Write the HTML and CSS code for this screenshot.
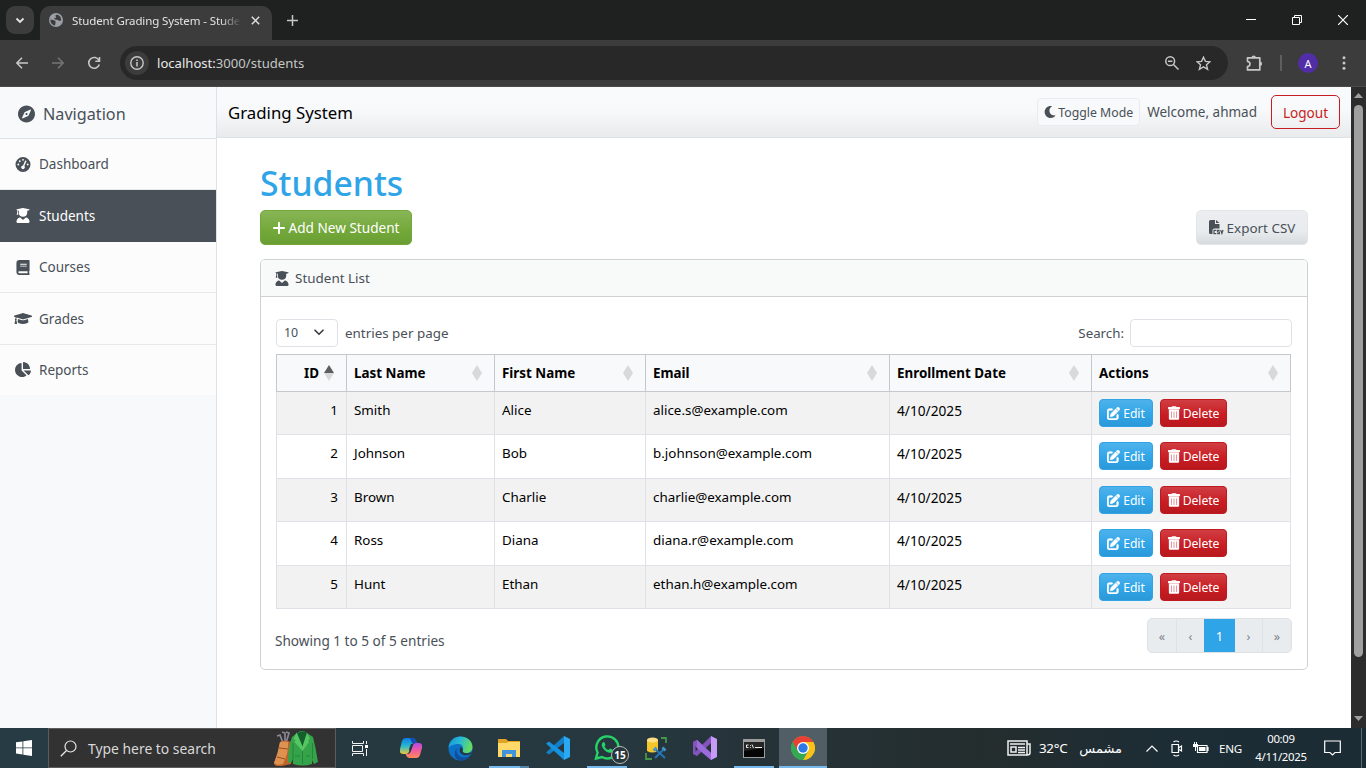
FILE: index.html
```html
<!DOCTYPE html>
<html lang="en">
<head>
<meta charset="utf-8">
<title>Student Grading System - Students</title>
<link rel="stylesheet" href="styles.css">
</head>
<body>
<svg class="sprite" aria-hidden="true">
  <defs>
    <symbol id="compass" viewBox="0 0 496 512"><path d="M225.38 233.37c-12.5 12.5-12.5 32.76 0 45.25 12.49 12.5 32.76 12.5 45.25 0 12.5-12.5 12.5-32.76 0-45.25-12.5-12.49-32.76-12.49-45.25 0zM248 8C111.03 8 0 119.03 0 256s111.03 248 248 248 248-111.03 248-248S384.97 8 248 8zm126.14 148.05L308.17 300.4a31.938 31.938 0 0 1-15.77 15.77l-144.34 65.97c-16.65 7.61-33.81-9.55-26.2-26.2l65.98-144.35a31.938 31.938 0 0 1 15.77-15.77l144.34-65.97c16.65-7.6 33.8 9.55 26.19 26.2z"/></symbol>
    <symbol id="gauge" viewBox="0 0 512 512"><path fill-rule="evenodd" d="M256 0a256 256 0 1 1 0 512A256 256 0 0 1 256 0zM256 64a32 32 0 1 0 0 64 32 32 0 0 0 0-64zM144 112a32 32 0 1 0 0 64 32 32 0 0 0 0-64zM96 224a32 32 0 1 0 0 64 32 32 0 0 0 0-64zM416 224a32 32 0 1 0 0 64 32 32 0 0 0 0-64zM256 416c35 0 64-29 64-64 0-17-7-33-18-45l69-157c5-12 0-26-12-32s-26 0-32 12l-69 158h-2c-35 0-64 29-64 64s29 64 64 64z"/></symbol>
    <symbol id="graduate" viewBox="0 0 448 512"><path d="M219 3c3-1 7-1 10 0l203 40c9 2 16 8 16 17s-7 15-16 17l-64 15v68c0 82-62 140-144 140S80 242 80 160V92L50 86v58l18 84H8l18-84V80C10 77 0 69 0 60s7-15 16-17zM104 322c8-3 17 0 22 5l80 66c10 9 26 9 36 0l80-66c5-5 14-8 22-5 65 24 104 80 104 150 0 22-18 40-40 40H40c-22 0-40-18-40-40 0-70 39-126 104-150z"/></symbol>
    <symbol id="book" viewBox="0 0 448 512"><path d="M448 360V24c0-13.3-10.7-24-24-24H96C43 0 0 43 0 96v320c0 53 43 96 96 96h328c13.3 0 24-10.7 24-24v-16c0-7.5-3.5-14.3-8.9-18.7-4.2-15.4-4.2-59.3 0-74.7 5.4-4.3 8.9-11.1 8.9-18.6zM128 134c0-3.3 2.7-6 6-6h212c3.3 0 6 2.7 6 6v20c0 3.3-2.7 6-6 6H134c-3.3 0-6-2.7-6-6v-20zm0 64c0-3.3 2.7-6 6-6h212c3.3 0 6 2.7 6 6v20c0 3.3-2.7 6-6 6H134c-3.3 0-6-2.7-6-6v-20zm253.4 250H96c-17.7 0-32-14.3-32-32 0-17.6 14.4-32 32-32h285.4c-1.9 17.1-1.9 46.9 0 64z"/></symbol>
    <symbol id="cap" viewBox="0 0 640 512"><path d="M622.34 153.2L343.4 67.5c-15.2-4.67-31.6-4.67-46.79 0L17.66 153.2c-23.54 7.23-23.54 38.36 0 45.59l48.63 14.94c-10.67 13.19-17.23 29.28-17.88 46.9C38.78 266.15 32 276.11 32 288c0 10.78 5.68 19.85 13.86 25.65L20.33 428.53C18.11 438.52 25.71 448 35.94 448h56.11c10.24 0 17.84-9.48 15.62-19.47L82.14 313.65C90.32 307.85 96 298.78 96 288c0-11.57-6.47-21.25-15.66-26.87.76-15.02 8.44-28.3 20.69-36.72L296.6 284.5c9.06 2.78 26.44 6.25 46.79 0l278.95-85.7c23.55-7.24 23.55-38.36 0-45.6zM352.79 315.09c-28.53 8.76-52.84 3.92-65.59 0l-145.02-44.55L128 384c0 35.35 85.96 64 192 64s192-28.65 192-64l-14.18-113.47-145.03 44.56z"/></symbol>
    <symbol id="pie" viewBox="0 0 544 512"><path d="M527.79 288H290.5l158.03 158.03c6.04 6.04 15.98 6.53 22.19.68 38.7-36.46 65.32-85.61 73.13-140.86 1.34-9.46-6.51-17.85-16.06-17.85zm-15.83-64.8C503.72 103.74 408.26 8.28 288.8.04 279.68-.59 272 7.1 272 16.24V240h223.77c9.14 0 16.82-7.68 16.19-16.8zM224 288V50.71c0-9.55-8.39-17.4-17.84-16.06C86.99 51.49-4.1 155.6.14 280.37 4.5 408.51 114.83 513.59 243.03 511.98c50.4-.63 96.97-16.87 135.26-44.03 7.9-5.6 8.42-17.23 1.57-24.08L224 288z"/></symbol>
    <symbol id="moon" viewBox="0 0 512 512"><path d="M283.211 512c78.962 0 151.079-35.925 198.857-94.792 7.068-8.708-.639-21.43-11.562-19.35-124.203 23.654-238.262-71.576-238.262-196.954 0-72.222 38.662-138.635 101.498-174.394 9.686-5.512 7.25-20.197-3.756-22.23A258.156 258.156 0 0 0 283.211 0c-141.309 0-256 114.511-256 256 0 141.309 114.511 256 256 256z"/></symbol>
    <symbol id="edit" viewBox="0 0 512 512"><path stroke="currentColor" stroke-width="22" d="M471.6 21.7c-21.9-21.9-57.3-21.9-79.2 0L362.3 51.7l97.9 97.9 30.1-30.1c21.9-21.9 21.9-57.3 0-79.2L471.6 21.7zm-299.2 220c-6.1 6.1-10.8 13.6-13.5 21.9l-29.6 88.800c-2.9 8.6-.6 18.1 5.8 24.600s15.900 8.700 24.600 5.800l88.800-29.600c8.2-2.700 15.700-7.400 21.900-13.500L437.700 172.300 339.700 74.300 172.400 241.700zM96 64C43 64 0 107 0 160V416c0 53 43 96 96 96H352c53 0 96-43 96-96V320c0-17.700-14.300-32-32-32s-32 14.300-32 32v96c0 17.700-14.300 32-32 32H96c-17.700 0-32-14.300-32-32V160c0-17.700 14.300-32 32-32h96c17.700 0 32-14.300 32-32s-14.300-32-32-32H96z"/></symbol>
    <symbol id="trash" viewBox="0 0 448 512"><path fill-rule="evenodd" d="M135 18L128 32H24C10 32 0 42 0 56v32c0 14 10 24 24 24H424c14 0 24-10 24-24V56c0-14-10-24-24-24H320l-7-14C307 7 296 0 284 0H164c-12 0-23 7-29 18zM32 128H416V464c0 27-21 48-48 48H80c-27 0-48-21-48-48z"/><path d="M130 200v240M224 200v240M318 200v240" stroke="#e58a90" stroke-width="34"/></symbol>
    <symbol id="sort" viewBox="0 0 10 16"><path d="M5 0l5 8H0z" class="sort-up"/><path d="M5 16l5-8H0z"/></symbol>
  </defs>
</svg>

<div class="screen">
  <div class="tabstrip">
    <button class="tab-search"><svg width="10" height="7" viewBox="0 0 10 7"><path d="M1.500 1.500L5 5l3.500-3.500" fill="none" stroke="#e3e3e3" stroke-width="1.800"/></svg></button>
    <div class="tab">
      <svg width="14" height="14" viewBox="0 0 14 14"><circle cx="7" cy="7" r="7" fill="#9aa0a6"/><path d="M1.500 6.500L4 7l2.500 1v2L6 12.500C3 12 1.200 9.500 1.500 6.500zM6.500 2L9 1.700l2.500 2.200.8 3.400-2 .7L9 7 6 6.500 5 5h2z" fill="#3c3c3c"/></svg>
      <span class="tab-title">Student Grading System - Stude</span>
      <svg width="9" height="9" viewBox="0 0 9 9"><path d="M.8.8l7.400 7.400M8.200.8L.8 8.200" stroke="#dfdfdf" stroke-width="1.500"/></svg>
    </div>
    <svg class="tab-new" width="11" height="11" viewBox="0 0 11 11"><path d="M5.500 0v11M0 5.500h11" stroke="#c7c7c7" stroke-width="1.500"/></svg>
    <div class="window-buttons">
      <svg width="10" height="10" viewBox="0 0 10 10"><path d="M0 4.500h10" stroke="#fff"/></svg>
      <svg width="10" height="10" viewBox="0 0 10 10"><path d="M.5 2.500h7v7h-7zM2.500 2.500v-2h7v7h-2" fill="none" stroke="#fff"/></svg>
      <svg width="10" height="10" viewBox="0 0 10 10"><path d="M0 0l10 10M10 0L0 10" stroke="#fff" stroke-width="1.200"/></svg>
    </div>
  </div>

  <div class="toolbar">
    <svg class="tool" width="12" height="12" viewBox="0 0 12 12"><path d="M12 6H1M6 .8L.9 6 6 11.200" fill="none" stroke="#c7c7c7" stroke-width="1.500"/></svg>
    <svg class="tool" width="12" height="12" viewBox="0 0 12 12"><path d="M0 6h11M6 .8L11.100 6 6 11.200" fill="none" stroke="#757575" stroke-width="1.500"/></svg>
    <svg class="tool" width="14" height="14" viewBox="0 0 14 14"><path d="M12 4.500A5.400 5.400 0 1 0 12.300 8.500M12.500 1v4.300H8.300" fill="none" stroke="#c7c7c7" stroke-width="1.600"/></svg>
    <div class="omnibox">
      <span class="site-info"><svg width="14" height="14" viewBox="0 0 14 14"><circle cx="7" cy="7" r="6.200" fill="none" stroke="#c7c7c7" stroke-width="1.400"/><path d="M7 6v4.500M7 3.500v1.500" stroke="#c7c7c7" stroke-width="1.500"/></svg></span>
      <span class="url">localhost:<span class="url-path">3000/students</span></span>
      <svg width="14" height="14" viewBox="0 0 14 14"><circle cx="5.200" cy="5.200" r="4.400" fill="none" stroke="#c7c7c7" stroke-width="1.500"/><path d="M8.500 8.500l5 5M3 5.200h4.400" stroke="#c7c7c7" stroke-width="1.500"/></svg>
      <svg class="star" width="15" height="15" viewBox="0 0 15 15"><path d="M7.500 1.200l1.900 4.200 4.600.4-3.500 3 1.100 4.600-4.100-2.500-4.100 2.500 1.100-4.600-3.500-3 4.600-.4z" fill="none" stroke="#c7c7c7" stroke-width="1.400"/></svg>
    </div>
    <svg class="puzzle" width="17" height="17" viewBox="0 0 17 17"><path d="M1.500 2.800H13.800V14.900H1.500V11.600C4.800 11 4.800 6.900 1.500 6.300z" fill="none" stroke="#c7c7c7" stroke-width="1.700" stroke-linejoin="round"/><path d="M5.500 2.800a2.200 2.200 0 0 1 4.400 0zM13.800 6.500a2.300 2.300 0 0 1 0 4.600z" fill="#c7c7c7"/></svg>
    <span class="tool-divider"></span>
    <span class="avatar">A</span>
    <svg class="kebab" width="4" height="14" viewBox="0 0 4 14"><g fill="#c7c7c7"><circle cx="2" cy="1.700" r="1.500"/><circle cx="2" cy="7" r="1.500"/><circle cx="2" cy="12.300" r="1.500"/></g></svg>
  </div>

  <div class="viewport">
    <aside class="sidebar">
      <div class="side-head"><svg><use href="#compass"/></svg>Navigation</div>
      <a class="side-link"><svg><use href="#gauge"/></svg><span>Dashboard</span></a>
      <a class="side-link active"><svg><use href="#graduate"/></svg><span>Students</span></a>
      <a class="side-link"><svg><use href="#book"/></svg><span>Courses</span></a>
      <a class="side-link tall"><svg class="wide"><use href="#cap"/></svg><span>Grades</span></a>
      <a class="side-link last"><svg class="pie"><use href="#pie"/></svg><span>Reports</span></a>
    </aside>

    <div class="page">
      <header class="navbar">
        <span class="brand">Grading System</span>
        <button class="mode"><svg width="12" height="12"><use href="#moon"/></svg>Toggle Mode</button>
        <span class="welcome">Welcome, ahmad</span>
        <button class="logout">Logout</button>
      </header>

      <main class="content">
        <h1>Students</h1>
        <div class="actions">
          <button class="btn-add"><svg width="12" height="12" viewBox="0 0 12 12"><path d="M6 .8v10.400M.8 6h10.400" stroke="#fff" stroke-width="1.900" stroke-linecap="round"/></svg>Add New Student</button>
          <button class="btn-export"><svg width="15" height="15" viewBox="0 0 15 15"><path d="M0 1.500Q0 0 1.500 0H6v4h4.500v4.500H5.500Q3.500 8.500 3.500 10v4H1.500Q0 14 0 12.500zM7 0l3.500 3H7z" fill="#495057"/><path d="M7.300 10.400H5v3.200h2.300M10.600 10.400H8.500V12h1.900v1.600H8.200M11.700 10l1.200 3.400L14.100 10" fill="none" stroke="#495057" stroke-width="1.200"/></svg>Export CSV</button>
        </div>

        <section class="card">
          <div class="card-head"><svg><use href="#graduate"/></svg>Student List</div>
          <div class="card-body">
            <div class="controls">
              <span class="page-size">10<svg width="10" height="7" viewBox="0 0 10 7"><path d="M1 1.200l4 4 4-4" fill="none" stroke="#343a40" stroke-width="1.600" stroke-linecap="round"/></svg></span>
              <span class="per-page">entries per page</span>
              <label>Search:</label><input class="search">
            </div>
            <table>
              <colgroup><col class="c-id"><col class="c-last"><col class="c-first"><col class="c-mail"><col class="c-date"><col class="c-act"></colgroup>
              <thead>
                <tr>
                  <th><div class="th id sorted">ID<svg><use href="#sort"/></svg></div></th>
                  <th><div class="th">Last Name<svg><use href="#sort"/></svg></div></th>
                  <th><div class="th">First Name<svg><use href="#sort"/></svg></div></th>
                  <th><div class="th">Email<svg><use href="#sort"/></svg></div></th>
                  <th><div class="th">Enrollment Date<svg><use href="#sort"/></svg></div></th>
                  <th><div class="th">Actions<svg><use href="#sort"/></svg></div></th>
                </tr>
              </thead>
              <tbody>
                <tr><td class="num">1</td><td>Smith</td><td>Alice</td><td>alice.s@example.com</td><td>4/10/2025</td><td class="ops"><div><button class="edit"><svg><use href="#edit"/></svg>Edit</button><button class="delete"><svg><use href="#trash"/></svg>Delete</button></div></td></tr>
                <tr><td class="num">2</td><td>Johnson</td><td>Bob</td><td>b.johnson@example.com</td><td>4/10/2025</td><td class="ops"><div><button class="edit"><svg><use href="#edit"/></svg>Edit</button><button class="delete"><svg><use href="#trash"/></svg>Delete</button></div></td></tr>
                <tr><td class="num">3</td><td>Brown</td><td>Charlie</td><td>charlie@example.com</td><td>4/10/2025</td><td class="ops"><div><button class="edit"><svg><use href="#edit"/></svg>Edit</button><button class="delete"><svg><use href="#trash"/></svg>Delete</button></div></td></tr>
                <tr><td class="num">4</td><td>Ross</td><td>Diana</td><td>diana.r@example.com</td><td>4/10/2025</td><td class="ops"><div><button class="edit"><svg><use href="#edit"/></svg>Edit</button><button class="delete"><svg><use href="#trash"/></svg>Delete</button></div></td></tr>
                <tr><td class="num">5</td><td>Hunt</td><td>Ethan</td><td>ethan.h@example.com</td><td>4/10/2025</td><td class="ops"><div><button class="edit"><svg><use href="#edit"/></svg>Edit</button><button class="delete"><svg><use href="#trash"/></svg>Delete</button></div></td></tr>
              </tbody>
            </table>
            <div class="table-foot">
              <span class="info">Showing 1 to 5 of 5 entries</span>
              <div class="pager"><span class="p1">«</span><span class="p2">‹</span><span class="current">1</span><span class="p2">›</span><span class="p1">»</span></div>
            </div>
          </div>
        </section>
      </main>
    </div>

    <div class="scrollbar">
      <svg width="9" height="5" viewBox="0 0 9 5"><path d="M4.500 0L9 5H0z" fill="#9f9f9f"/></svg>
      <span class="thumb"></span>
      <svg width="9" height="5" viewBox="0 0 9 5"><path d="M4.500 5L9 0H0z" fill="#9f9f9f"/></svg>
    </div>
  </div>

  <div class="taskbar">
    <span class="start"><svg width="16" height="16" viewBox="0 0 16 16"><path d="M0 2.300L6.500 1.400V7.500H0zM7.300 1.300L16 0V7.500H7.300zM0 8.300H6.500v6.200L0 13.600zM7.300 8.300H16V16L7.300 14.700z" fill="#fff"/></svg></span>
    <div class="task-search">
      <svg width="17" height="17" viewBox="0 0 17 17"><circle cx="10.500" cy="6.500" r="5.500" fill="none" stroke="#e6e6e6" stroke-width="1.200"/><path d="M6.500 10.500L.8 16.200" stroke="#e6e6e6" stroke-width="1.300"/></svg>
      <span>Type here to search</span>
      <svg class="jacket" width="45" height="36" viewBox="0 0 45 36"><path d="M9 13L6 5 3 6M11 13V3L8 2M12 13L15 3l-3-1" fill="none" stroke="#8d8796" stroke-width="1.700"/><path d="M6 12q5-3 11 0l2 4-2 18-9 2q-8 1-8-3 2-4 4-11z" fill="#b9652b"/><path d="M6 12q4-1 8 0 1 10-5 22-7 2-9-1 4-10 6-21z" fill="#df914f"/><path d="M5 18l9 1M3 27l8 2" stroke="#96501f"/><path d="M23 3q5-4 10 0l6 4q3 12 5 25l-4 2-2-4v4q-9 3-19 0v-5l-2 4-3-1q0-15 4-25z" fill="#35a34a"/><path d="M23 3l5.500 14L34 3q-5-3-11 0z" fill="#14602c"/><path d="M22.500 2.500l-3 6.500 2 1-1 2 8 9 6.500-9-1-2 2-1-3-6.500-4.500 14z" fill="#55c663"/><path d="M28.500 21v13M19 13v16M38.500 13v16M21 26h5M32 26h4" stroke="#207f34" stroke-width=".8" fill="none"/></svg>
    </div>
    <span class="task"><svg width="16" height="15" viewBox="0 0 16 15"><path d="M.5 0v2.500h11V0M.5 15v-2.500h11V15M.5 4.500h10v6H.5zM14.500 0v3M14.500 8v7" fill="none" stroke="#f2f2f2"/><path d="M13 4h3v3h-3z" fill="#fff"/></svg></span>
    <span class="task copilot"><svg width="22" height="21" viewBox="0 0 22 21"><defs><linearGradient id="cpA" x1="0" y1="0" x2="0" y2="1"><stop offset="0" stop-color="#0a7de2"/><stop offset=".5" stop-color="#28b7d0"/><stop offset="1" stop-color="#e9c83d"/></linearGradient><linearGradient id="cpB" x1="0" y1="0" x2="0" y2="1"><stop offset="0" stop-color="#b44be8"/><stop offset=".5" stop-color="#f25b9d"/><stop offset="1" stop-color="#ff8b57"/></linearGradient></defs><path d="M6 0h7q2 0 3 3l1 2h-3q-2 0-3 3l-2 6q-1 2-3 2H3q-4 0-3-5l2-8q1-3 4-3z" fill="url(#cpA)"/><path d="M16 20H9q-2 0-3-3l-.5-1H8q2 0 3-3l2-6q1-2 3-2h3q4 0 3 5l-2 7q-1 3-4 3z" fill="url(#cpB)"/><path d="M10 0h3q2 0 3 3l1 2h-3L12 5z" fill="#184bb8"/><path d="M9 11l2-5h2l-3 8z" fill="#26373f"/></svg></span>
    <span class="task"><svg width="25" height="25" viewBox="0 0 25 25"><defs><linearGradient id="edge" x1="0" y1="0" x2="1" y2=".3"><stop offset="0" stop-color="#168fdb"/><stop offset=".5" stop-color="#27b9d6"/><stop offset="1" stop-color="#63db63"/></linearGradient></defs><circle cx="12.500" cy="12.500" r="12" fill="#0c72c7"/><path d="M.5 12C1 5 6 .5 12.500.5S24.500 5 24.500 11c0 4-3 6-6.500 6-3 0-4-1-3-3 .7-1.500 0-6-4.500-6S1.500 10 .5 12z" fill="url(#edge)"/><path d="M8.500 14c0 7 8 10 14 5-2 4-6 5.500-10 5.500C5.500 24.500 5 15 10 11c-1 1-1.500 2-1.500 3z" fill="#124f9b"/><path d="M12.500 11q-3 5 3 8 4 1 8-1.500V16q-3 2-7 1-3-1-1.500-3-.5-2-2.500-3z" fill="#253840"/></svg></span>
    <span class="task running explorer"><svg width="22" height="19" viewBox="0 0 22 19"><path d="M0 0h8l2 2h12v16H0z" fill="#e0a623"/><path d="M0 4h9l1-1h12v15H0z" fill="#ffd969"/><path d="M4 18v-7h14v7h-4v-3H8v3z" fill="#3f94dd"/></svg></span>
    <span class="task"><svg width="24" height="24" viewBox="0 0 24 24"><path d="M18 0l6 3v18l-6 3z" fill="#2aa8f2"/><path d="M18 0v7L3 18.500 0 16.500z" fill="#1180c9"/><path d="M18 24v-7L3 5.500 0 7.500z" fill="#1593df"/></svg></span>
    <span class="task running whatsapp"><svg width="26" height="26" viewBox="0 0 26 26"><path d="M2 23.500l1.600-6A11 11 0 1 1 8 22z" fill="none" stroke="#25d366" stroke-width="2.400"/><path d="M8.500 7.500q1-1 2 0l1 2.500-1 1.500q1 2.500 4 3.500l1.500-1.500 2.800 1.300q.5 2-2 3Q12 18 8.500 12.500 7 9.500 8.500 7.500z" fill="#25d366"/></svg><b class="badge">15</b></span>
    <span class="task"><svg width="22" height="23" viewBox="0 0 22 23"><path d="M2 3v11q5 3 11 0V3z" fill="#f5c62b"/><ellipse cx="7.500" cy="3" rx="5.500" ry="2.500" fill="#ffdf83"/><path d="M16 1h5v5M1 16v6h6" fill="none" stroke="#459647" stroke-width="1.800"/><path d="M10 12l10 9M19 12L10 21" stroke="#2375b8" stroke-width="2"/><path d="M8.500 13.500l3-3M17.500 10.500l3 3" stroke="#4695ce" stroke-width="2.500"/></svg></span>
    <span class="task"><svg width="24" height="24" viewBox="0 0 24 24"><path d="M0 6l4-2 14 13v7L3 11z" fill="#9060ce"/><path fill-rule="evenodd" d="M0 6l4-2 5 5 9-9v7L4 20l-4-2zM2.500 8.500v7L6 12z" fill="#8454bd"/><path d="M4 4l14 13v7L4 12z" fill="#9c6bda"/><path d="M18 0l6 3v18l-6 3z" fill="#c79af5"/></svg></span>
    <span class="task running"><svg width="22" height="19" viewBox="0 0 22 19"><path d="M0 0h22v19H0z" fill="#9d9d9d"/><path d="M1 3h20v15H1z" fill="#050505"/><path d="M1 3h20v6L1 12z" fill="#252525"/><path d="M5.500 6H3.500v2.500h2M7.500 6v.8M7.500 8v.8M9 5.500l1.500 3.500M12 8.500h7" fill="none" stroke="#eee"/></svg></span>
    <span class="task running chrome"><svg width="24" height="24" viewBox="0 0 24 24"><circle cx="12" cy="12" r="12" fill="#34a853"/><path d="M12 12L1.600 6A12 12 0 0 1 22.400 6z" fill="#e94235"/><path d="M12 6h10.400A12 12 0 0 1 12 24l5.200-9z" fill="#fbc116"/><path d="M1.600 6L6.800 15 12 12V6z" fill="#e94235"/><path d="M1.600 6l5.200 9 5.200 3 5-3-5 9A12 12 0 0 1 1.600 6z" fill="#34a853"/><circle cx="12" cy="12" r="6" fill="#fff"/><circle cx="12" cy="12" r="4.700" fill="#2c78e6"/></svg></span>
    <div class="tray">
      <svg width="24" height="16" viewBox="0 0 24 16"><path d="M1 1h19v14H1zM20 4h3v9q0 2-3 2M4 7h5v5H4zM3 4h15M11 7.500h7M11 10h7M11 12.500h7" fill="none" stroke="#efefef" stroke-width="1.500"/></svg>
      <span class="temp">32°C</span><span class="weather" dir="rtl">مشمس</span>
      <svg class="caret" width="12" height="7" viewBox="0 0 12 7"><path d="M.5 6.500L6 1l5.500 5.500" fill="none" stroke="#fff" stroke-width="1.200"/></svg>
      <svg class="cam" width="12" height="17" viewBox="0 0 12 17"><path d="M1 4.500h6.500v8H1zM8 7.500l2.500-1.500v5L8 9.500M2.500 2Q5 0 8 2M2.500 15Q5 17 8 15" fill="none" stroke="#fff" stroke-width="1.200"/></svg>
      <svg class="battery" width="16" height="12" viewBox="0 0 16 12"><path d="M4.500 3.500H14v7H4.500zM15 5v4" fill="none" stroke="#fff" stroke-width="1.200"/><path d="M6 5h6.500v4H6zM0 2h5v3H0zM1 0v2h1V0zM3 0v2h1V0zM2 5v4h1V5z" fill="#fff"/></svg>
      <span class="lang">ENG</span>
      <span class="clock"><span>00:09</span><span>4/11/2025</span></span>
      <svg class="notice" width="17" height="17" viewBox="0 0 17 17"><path d="M.7 1h15.600v11.500H11L8.500 15 6 12.500H.7z" fill="none" stroke="#fff" stroke-width="1.200"/></svg>
      <span class="peek"></span>
    </div>
  </div>
</div>
</body>
</html>
```
FILE: styles.css
```css
* { box-sizing: border-box; }
body { margin: 0; font-family: "Noto Sans", "Open Sans", sans-serif; font-size: 13.45px; color: #495057; }
button { font: inherit; margin: 0; }
svg { display: block; flex: none; fill: currentColor; }
.sprite { display: none; }
.screen { width: 1366px; height: 768px; display: flex; flex-direction: column; overflow: hidden; white-space: nowrap; }

/* Browser frame */
.tabstrip { height: 40px; background: #1f2020; display: flex; align-items: center; }
.tab-search { width: 28px; height: 28px; margin-left: 6px; padding: 0; border: 0; border-radius: 9px; background: #3c3c3c; display: grid; place-items: center; }
.tab { align-self: flex-end; width: 232px; height: 34px; margin-left: 6px; padding: 0 11px 6px 9px; border-radius: 10px 10px 0 0; background: #3c3c3c; display: flex; align-items: center; color: #e3e3e3; }
.tab-title { width: 169px; margin-left: 9px; margin-right: 10px; overflow: hidden; font-size: 11.5px; letter-spacing: -0.12px; -webkit-mask-image: linear-gradient(90deg, #000 88%, transparent); mask-image: linear-gradient(90deg, #000 88%, transparent); }
.tab-new { margin-left: 15px; }
.window-buttons { margin-left: auto; margin-right: 18px; display: flex; gap: 36px; }
.toolbar { height: 47px; background: #3c3c3c; border-bottom: 1px solid #4a4a4a; display: flex; align-items: center; padding-left: 16px; }
.tool { margin-right: 24px; }
.tool:nth-child(3) { margin-right: 19px; margin-left: -1px; }
.omnibox { width: 1108px; height: 34px; border-radius: 17px; background: #282828; display: flex; align-items: center; padding: 0 17px 0 5px; }
.site-info { width: 24px; height: 24px; border-radius: 50%; background: #3c3c3c; display: grid; place-items: center; }
.url { flex: 1; margin-left: 8px; color: #e8e8e8; font-size: 13.1px; }
.url-path { color: #c4c7c5; }
.star { margin-left: 17px; }
.puzzle { margin-left: 18px; }
.tool-divider { width: 2px; height: 16px; margin-left: 17px; background: #5e5e5e; }
.avatar { width: 20px; height: 20px; margin-left: 16px; border-radius: 50%; background: #512da8; color: #fff; font-size: 11px; display: grid; place-items: center; }
.kebab { margin-left: 24px; }

/* Application shell */
.viewport { height: 641px; display: flex; background: #fff; }
.sidebar { width: 217px; background: #f8f9fb; border-right: 1px solid #dee2e6; }
.side-head { height: 52px; padding: 2px 0 0 18px; border-bottom: 1px solid #dee2e6; display: flex; align-items: center; font-size: 16.2px; }
.side-head svg { width: 17px; height: 18px; margin-right: 8px; }
.side-link { height: 51px; padding-left: 14px; display: flex; align-items: center; background: #fcfcfc; border-bottom: 1px solid #e6e9ec; font-size: 13.5px; }
.side-link svg { width: 18px; height: 15px; margin-right: 7px; color: #495057; }
.side-link.active { height: 52px; background: #495057; border-color: #495057; color: #fff; }
.side-link.active svg { color: #fff; }
.side-link.tall { height: 52px; }
.side-link.last { height: 50px; padding-bottom: 1px; border-bottom: 0; }
.page { width: 1134px; }
.navbar { height: 51px; padding: 0 11px; border-bottom: 1px solid #dee2e6; background: linear-gradient(#f9fafb, #f8f9fa 45%, #e9eaec); display: flex; align-items: center; }
.brand { flex: 1; color: #000; font-size: 16.8px; }
.mode { height: 28px; width: 103px; padding: 0; border: 1px solid #e9ecef; border-radius: 4px; background: #f8f9fa; color: #495057; display: flex; align-items: center; justify-content: center; gap: 2px; font-size: 12.3px; }
.welcome { margin: 0 14px 0 7px; font-size: 13.5px; }
.logout { width: 69px; height: 34px; padding: 0; border: 1px solid #c71c22; border-radius: 5px; background: none; color: #c71c22; font-size: 13.6px; }
.content { padding: 22px 43px; }
h1 { margin: 0; height: 50px; line-height: 47px; font-size: 33.7px; font-weight: 500; color: #2fa4e7; }
.actions { display: flex; justify-content: space-between; height: 35px; }
.actions button { border-radius: 5px; display: flex; align-items: center; justify-content: center; gap: 4px; padding: 0; }
.actions .btn-add { width: 152px; border: 1px solid #73a839; background: linear-gradient(#88b557, #73a839 60%, #6a9e34); color: #fff; font-size: 13.6px; }
.actions .btn-export { width: 112px; gap: 3px; border: 1px solid #e2e6e9; background: linear-gradient(#ebedf0, #e9ecef 60%, #d7dbde); color: #495057; }

/* Student table card */
.card { height: 411px; margin-top: 14px; border: 1px solid #ced1d3; border-radius: 5px; overflow: hidden; }
.card-head { height: 37px; padding-left: 14px; background: #f8fafa; border-bottom: 1px solid #ced1d3; display: flex; align-items: center; }
.card-head svg { width: 14px; height: 15px; margin-right: 6px; }
.card-body { padding: 22px 15px 0; }
.controls { display: flex; align-items: center; height: 28px; margin-bottom: 7px; }
.page-size { width: 62px; height: 28px; padding: 0 13px 1px 7px; border: 1px solid #dee2e6; border-radius: 4px; display: flex; align-items: center; justify-content: space-between; font-size: 12.4px; }
.per-page { flex: 1; margin-left: 7px; padding-bottom: 1px; font-size: 13.4px; }
.controls label { padding-bottom: 1px; font-size: 13.3px; }
.search { width: 162px; height: 28px; margin-left: 6px; border: 1px solid #dee2e6; border-radius: 4px; background: #fff; }
table { width: 1015px; table-layout: fixed; border-collapse: collapse; color: #000; }
.c-id { width: 70px; } .c-last { width: 148px; } .c-first { width: 151px; } .c-mail { width: 244px; } .c-date { width: 202px; } .c-act { width: 199px; }
th, td { padding: 0 7px; border: 1px solid #dee2e6; text-align: left; }
th { height: 37px; border-color: #c6c7ca; background: #f8f9fb; font-weight: 700; font-size: 13.4px; }
.th { display: flex; align-items: center; justify-content: space-between; padding-right: 5px; }
.th.id { justify-content: flex-end; gap: 5px; }
.th svg { width: 10px; height: 16px; color: #d8d9db; }
.sorted svg { --up: #5d5e60; }
.sort-up { fill: var(--up, currentColor); }
td { height: 43px; vertical-align: top; padding-top: 9px; font-size: 13.4px; line-height: 19px; }
td:nth-child(5) { font-size: 13.7px; }
tbody tr:nth-child(even) td { height: 44px; }
tbody tr:nth-child(odd) td { background: #f2f2f2; }
td.num { text-align: right; padding-right: 8px; }
td.ops { padding-top: 7px; }
.ops div { display: flex; gap: 7px; }
.ops button { height: 28px; border-radius: 4px; padding: 0; color: #fff; display: flex; align-items: center; justify-content: center; gap: 2px; font-size: 12.2px; letter-spacing: -0.1px; }
.ops svg { height: 14px; width: 14px; }
.ops .delete svg { width: 12px; margin-right: 1px; }
.ops .edit svg { width: 13px; height: 13px; margin-right: 1px; }
.edit { width: 54px; border: 1px solid #2fa4e7; background: linear-gradient(#4eb2eb, #2fa4e7 60%, #2b98d7); }
.delete { width: 67px; border: 1px solid #bd1b20; background: linear-gradient(#d03e43, #c71c22 60%, #b7191e); }
.table-foot { display: flex; justify-content: space-between; margin-top: 9px; height: 35px; }
.info { align-self: flex-end; line-height: 25px; font-size: 13.6px; margin-left: -1px; }
.pager { display: flex; height: 35px; border: 1px solid #dee2e6; border-radius: 5px; overflow: hidden; background: #e9ecef; color: #7c8288; font-size: 12.4px; }
.pager span { display: grid; place-items: center; padding-top: 2px; }
.p1 { width: 29px; } .p2 { width: 27px; }
.pager .p1:first-child { border-right: 1px solid #dee2e6; }
.pager .p1:last-child { border-left: 1px solid #dee2e6; }
.pager .current { width: 31px; margin: -1px 0; padding: 0; background: #2fa4e7; color: #fff; font-size: 13px; }
.scrollbar { width: 15px; background: #2c2c2c; display: flex; flex-direction: column; align-items: center; padding: 6px 0 7px; }
.thumb { width: 9px; height: 552px; margin: 7px 0 auto; border-radius: 5px; background: #9f9f9f; }

/* Desktop taskbar */
.taskbar { height: 40px; background: linear-gradient(90deg, #263b43 0, #26373f 46%, #242d2e 72%, #1d2d35 85%, #1c2c34); display: flex; color: #fff; }
.start { width: 48px; display: grid; place-items: center; }
.task-search { width: 288px; border: 1px solid #5d5c59; background: #323232; display: flex; align-items: center; color: #d8d8d8; font-size: 13.9px; padding-left: 11px; }
.task-search span { margin-left: 11px; }
.jacket { margin-left: auto; margin-right: 16px; }
.task { width: 48px; margin-right: 1px; display: grid; place-items: center; position: relative; }
.task:nth-child(3) { margin-right: 3px; }
.task.running { box-shadow: inset 0 -2px #76b9ed; width: 40px; margin: 0 5px 0 4px; }
.task.explorer { box-shadow: none; background: linear-gradient(90deg, #76b9ed 31px, #5484a8 31px) bottom / 100% 2px no-repeat; }
.badge { position: absolute; left: 24px; top: 18px; width: 18px; height: 18px; border: 1px solid #bbb; border-radius: 50%; background: #26363b; font-size: 10px; line-height: 16px; text-align: center; }
.task.chrome { width: 48px; margin: 0; background: #515e66; }
.tray { margin-left: auto; display: flex; align-items: center; font-size: 13px; }
.temp { margin-left: 8px; width: 30px; font-size: 13.4px; letter-spacing: -0.3px; }
.weather { width: 45px; margin-left: 8px; font-family: "DejaVu Sans", sans-serif; font-size: 13px; }
.caret { margin-left: 24px; }
.cam { margin-left: 13px; }
.battery { margin-left: 10px; }
.lang { margin-left: 10px; width: 23px; font-size: 11.6px; letter-spacing: -0.3px; }
.clock { width: 58px; margin-left: 10px; display: flex; flex-direction: column; align-items: center; font-size: 11.4px; line-height: 18px; letter-spacing: -0.3px; }
.notice { margin-left: 14px; }
.peek { width: 1px; height: 40px; margin: 0 4px 0 20px; background: #5f6c72; }
```
